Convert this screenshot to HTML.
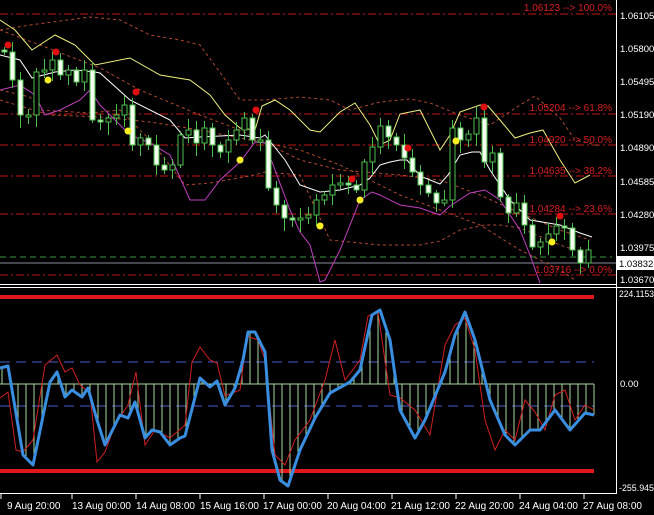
<!DOCTYPE html>
<html><head><meta charset="utf-8"><style>
html,body{margin:0;padding:0;background:#000;width:654px;height:515px;overflow:hidden}
svg{display:block}
text{font-family:"Liberation Sans",sans-serif;font-size:10px;fill:#fff}
.fib text{fill:#d82020;font-size:10px}
.ax text{font-size:9.5px}
</style></head><body>
<svg id="s" width="654" height="515" xmlns="http://www.w3.org/2000/svg">
<rect width="654" height="515" fill="#000"/>
<g stroke="#c01818" stroke-width="1" stroke-dasharray="8,3,2,3">
<line x1="0" y1="14" x2="616" y2="14"/><line x1="0" y1="114" x2="616" y2="114"/>
<line x1="0" y1="145" x2="616" y2="145"/><line x1="0" y1="176" x2="616" y2="176"/>
<line x1="0" y1="214" x2="616" y2="214"/><line x1="0" y1="275" x2="616" y2="275"/>
</g>
<line x1="0" y1="257" x2="612" y2="257" stroke="#3a9a3a" stroke-dasharray="6,4"/>
<line x1="0" y1="263" x2="616" y2="263" stroke="#8c8c9c"/>
<g fill="none" stroke="#b04a30" stroke-width="1" stroke-dasharray="3,3">
<polyline points="0,30 30,25 90,17 120,20 150,35 180,40 200,45 240,100 265,100 300,97 330,100 350,110 380,102 410,99 430,103 460,115 490,125 520,105 535,96 560,118 575,140 600,146"/>
<polyline points="0,90 30,97 40,110 90,113 120,110 150,140 185,185 210,183 250,176 265,172 300,175 330,240 380,245 420,245 440,241 460,230 485,225 500,225 520,228 560,245 575,250"/>
<polyline points="0,30 40,45 100,68 140,90 200,115 240,130 300,160 340,170 400,175 440,180 480,195 520,213 560,230 590,240"/>
<polyline points="0,100 50,115 100,117 150,122 200,130 250,140 300,150 340,165 400,195 440,210 480,225 520,250 560,270 575,280"/>
</g>
<polyline fill="none" stroke="#f0f080" stroke-width="1" points="0,20 15,30 32,50 55,35 75,45 95,65 130,58 160,75 190,80 210,95 225,115 240,128 255,130 262,106 275,100 290,110 310,130 320,132 340,112 355,103 370,125 380,145 390,140 400,114 420,110 440,150 450,135 460,112 480,105 488,106 500,120 515,138 530,133 543,130 560,160 575,183 590,175"/>
<polyline fill="none" stroke="#ffffff" stroke-width="1" points="0,55 20,60 32,78 55,72 75,70 95,72 100,73 130,100 170,120 185,138 200,137 240,135 260,138 265,135 285,160 300,185 320,192 340,190 360,185 370,178 380,165 390,162 400,160 407,160 420,176 440,184 448,175 460,155 472,152 480,152 490,170 510,200 530,220 560,225 580,233 592,237"/>
<polyline fill="none" stroke="#c040c0" stroke-width="1" points="0,90 20,85 35,95 45,115 60,110 80,100 90,90 100,105 130,135 150,143 170,155 190,200 205,200 220,180 240,162 255,142 265,143 275,170 290,210 300,232 310,245 320,282 325,280 340,250 360,200 372,192 380,195 400,205 420,208 440,215 450,206 470,193 485,190 500,200 520,230 530,255 540,283"/>
<g id="candles"></g>
<g id="dots"></g>
<g class="fib" text-anchor="end">
<text x="612" y="11">1.06123 --&gt; 100.0%</text>
<text x="612" y="111">1.05204 --&gt; 61.8%</text>
<text x="612" y="143">1.04920 --&gt; 50.0%</text>
<text x="612" y="174">1.04635 --&gt; 38.2%</text>
<text x="612" y="212">1.04284 --&gt; 23.6%</text>
<text x="612" y="273">1.03716 --&gt; 0.0%</text>
</g>
<line x1="0" y1="284.5" x2="616" y2="284.5" stroke="#fff"/>
<line x1="0" y1="287.5" x2="654" y2="287.5" stroke="#fff"/>
<line x1="616.5" y1="0" x2="616.5" y2="494" stroke="#fff"/>
<line x1="0" y1="493.5" x2="617" y2="493.5" stroke="#fff"/>
<g class="ax">
<text x="620" y="19">1.06105</text><text x="620" y="52">1.05800</text><text x="620" y="85">1.05495</text>
<text x="620" y="118">1.05190</text><text x="620" y="151">1.04890</text><text x="620" y="185">1.04585</text>
<text x="620" y="218">1.04280</text><text x="620" y="251">1.03975</text><text x="620" y="283">1.03670</text>
</g>
<rect x="617" y="256" width="37" height="14" fill="#fff"/>
<text x="619" y="267" style="fill:#000;font-size:9.5px">1.03832</text>
<line x1="0" y1="297" x2="594" y2="297" stroke="#e01818" stroke-width="4"/>
<line x1="0" y1="471" x2="594" y2="471" stroke="#e01818" stroke-width="4"/>
<g stroke="#4a60d0" stroke-dasharray="10,6"><line x1="0" y1="362" x2="594" y2="362"/><line x1="0" y1="406" x2="594" y2="406"/></g>
<g id="hist"></g>
<polyline fill="none" stroke="#d02020" stroke-width="1" points="0,398 8,392 16,450 23,452 33,440 45,365 57,355 65,372 72,368 80,385 90,393 97,462 105,452 115,425 128,405 136,372 145,445 155,430 170,438 185,425 192,362 200,347 210,360 217,363 225,396 240,390 247,336 258,340 265,360 275,455 285,465 295,440 310,420 325,380 335,340 345,380 360,360 368,316 378,312 390,395 400,398 415,410 430,435 445,345 455,325 465,318 475,350 485,420 495,450 505,430 515,440 525,400 535,412 545,430 555,395 565,390 575,420 585,405 594,410"/>
<polyline id="blue" fill="none" stroke="#3a8ee0" stroke-width="3" stroke-linejoin="round" points="0,368 8,366 23,455 33,465 50,382 57,372 65,397 72,390 82,397 88,388 97,420 105,445 120,415 128,418 135,402 145,438 152,430 160,432 170,445 180,438 185,436 200,378 210,387 217,381 225,405 235,388 243,360 248,332 255,332 265,352 272,450 280,480 288,486 300,450 315,418 330,393 350,382 360,370 372,315 380,310 390,340 400,410 415,438 425,420 445,372 455,335 465,312 475,340 490,400 505,435 515,445 530,430 540,430 555,410 570,430 585,413 594,415"/>
<g class="ax"><text x="619" y="297" textLength="35" lengthAdjust="spacingAndGlyphs">224.1153</text><text x="620" y="387">0.00</text><text x="619" y="491" textLength="35" lengthAdjust="spacingAndGlyphs">-255.945</text></g>
<g stroke="#fff"><line x1="1" y1="494" x2="1" y2="499"/><line x1="72" y1="494" x2="72" y2="499"/><line x1="136" y1="494" x2="136" y2="499"/><line x1="200" y1="494" x2="200" y2="499"/><line x1="264" y1="494" x2="264" y2="499"/><line x1="328" y1="494" x2="328" y2="499"/><line x1="392" y1="494" x2="392" y2="499"/><line x1="456" y1="494" x2="456" y2="499"/><line x1="520" y1="494" x2="520" y2="499"/><line x1="584" y1="494" x2="584" y2="499"/></g>
<g><text x="7" y="509">9 Aug 20:00</text><text x="72" y="509">13 Aug 00:00</text><text x="136" y="509">14 Aug 08:00</text><text x="200" y="509">15 Aug 16:00</text><text x="263" y="509">17 Aug 00:00</text><text x="327" y="509">20 Aug 04:00</text><text x="391" y="509">21 Aug 12:00</text><text x="455" y="509">22 Aug 20:00</text><text x="519" y="509">24 Aug 04:00</text><text x="583" y="509">27 Aug 08:00</text></g>
</svg>
<script>
(function(){
var NS="http://www.w3.org/2000/svg";
function el(t,a,p){var e=document.createElementNS(NS,t);for(var k in a)e.setAttribute(k,a[k]);p.appendChild(e);return e;}
var c=[52,80,115,115,72,70,60,75,70,82,70,120,122,118,115,105,145,138,145,165,170,165,135,130,143,128,145,152,140,130,118,140,140,188,205,218,220,218,215,200,195,185,183,185,190,162,147,126,137,145,158,172,185,193,203,200,128,140,134,118,162,153,197,213,203,225,247,242,234,226,228,250,263,250];
var g=document.getElementById("candles");var o=50;
for(var i=0;i<c.length;i++){var x=4+i*8,cl=c[i];var t=Math.min(o,cl),b=Math.max(o,cl);if(b-t<2){b=t+2;}
var hi=t-3-((i*7)%9),lo=b+3+((i*5)%11);
el("line",{x1:x+0.5,y1:hi,x2:x+0.5,y2:lo,stroke:"#4cc04c"},g);
el("rect",{x:x-2,y:t,width:5,height:b-t,fill:cl>o?"#f4fff0":"#000",stroke:"#4cc04c","stroke-width":1},g);o=cl;}
var d=document.getElementById("dots");
[[8,45],[56,52],[136,92],[256,110],[352,179],[408,148],[484,107],[560,216]].forEach(function(p){el("circle",{cx:p[0],cy:p[1],r:3.5,fill:"#e01010"},d);});
[[48,80],[128,131],[240,160],[320,226],[360,200],[456,141],[552,242]].forEach(function(p){el("circle",{cx:p[0],cy:p[1],r:3.5,fill:"#f8f020"},d);});
var pts=document.getElementById("blue").getAttribute("points").trim().split(/\s+/).map(function(s){return s.split(",").map(Number);});
function yat(x){for(var j=1;j<pts.length;j++){if(x<=pts[j][0]){var a=pts[j-1],b=pts[j];return a[1]+(b[1]-a[1])*(x-a[0])/(b[0]-a[0]);}}return pts[pts.length-1][1];}
var h=document.getElementById("hist");
for(var x=2;x<=594;x+=8){el("line",{x1:x,y1:384,x2:x,y2:yat(x),stroke:"#a8d8a0"},h);}
el("line",{x1:0,y1:384,x2:594,y2:384,stroke:"#a8d8a0"},h);
})();
</script>
</body></html>
